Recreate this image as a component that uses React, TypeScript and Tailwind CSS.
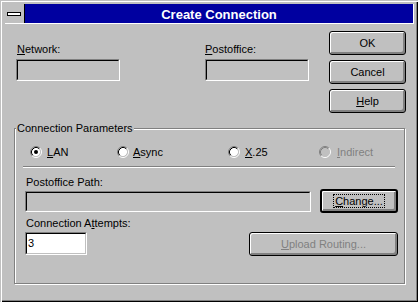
import React from 'react';

function Sunken({ className = '', inner = '', children }: { className?: string; inner?: string; children?: React.ReactNode }) {
  return (
    <div className={`border border-t-[#808080] border-l-[#808080] border-b-white border-r-white ${className}`}>
      <div className={`h-full border border-t-black border-l-black border-b-[#c0c0c0] border-r-[#c0c0c0] ${inner}`}>{children}</div>
    </div>
  );
}

function Btn({ className = '', def = false, disabled = false, children }: { className?: string; def?: boolean; disabled?: boolean; children: React.ReactNode }) {
  return (
    <button
      className={`flex items-center justify-center rounded-[3px] border-black bg-[#c0c0c0] p-0 text-[11px] leading-[13px] shadow-[inset_1px_1px_0_#fff,inset_-1px_-1px_0_#808080,inset_-2px_-2px_0_#808080] ${
        def ? 'border-2' : 'border'
      } ${disabled ? 'text-[#808080]' : 'text-black'} ${className}`}
    >
      {children}
    </button>
  );
}

function Radio({ checked = false, disabled = false }: { checked?: boolean; disabled?: boolean }) {
  return (
    <svg width="12" height="12" viewBox="0 0 12 12" className="shrink-0">
      <circle cx="6" cy="6" r="4.2" fill={disabled ? '#c0c0c0' : '#fff'} />
      <path d="M2.11 9.89 A5.5 5.5 0 0 1 9.89 2.11" fill="none" stroke="#808080" />
      <path d="M9.89 2.11 A5.5 5.5 0 0 1 2.11 9.89" fill="none" stroke="#fff" />
      <path d="M2.82 9.18 A4.5 4.5 0 0 1 9.18 2.82" fill="none" stroke={disabled ? '#808080' : '#000'} />
      <path d="M9.18 2.82 A4.5 4.5 0 0 1 2.82 9.18" fill="none" stroke="#c0c0c0" />
      {checked && <circle cx="6" cy="6" r="2" fill="#000" />}
    </svg>
  );
}

export default function App() {
  return (
    <div className="h-[302px] w-[418px] overflow-hidden bg-[#c0c0c0] pt-[4px] font-['Liberation_Sans',Arial,sans-serif] text-[11px] leading-[13px] text-black shadow-[inset_1px_1px_0_#c0c0c0,inset_2px_2px_0_#fff,inset_-1px_-1px_0_#000,inset_-2px_-2px_0_#808080]">
      {/* title bar */}
      <div className="ml-[5px] flex h-[20px] w-[409px] border-r border-b border-white">
        <div className="flex w-[20px] items-center justify-center border-r border-black bg-[#c0c0c0]">
          <div className="mr-[1px] h-[4px] w-[14px] border border-black bg-white" />
        </div>
        <div className="flex flex-1 items-center justify-center bg-[#0000a0] pt-[1px] text-[13px] font-bold text-white">
          Create Connection
        </div>
      </div>

      <div className="flex pl-[16px]">
        <div className="flex pt-[19px]">
          <div className="w-[104px]">
            <div className="ml-[1px] h-[13px]">
              <u>N</u>etwork:
            </div>
            <Sunken className="mt-[3px] h-[22px]" />
          </div>
          <div className="ml-[85px] w-[104px]">
            <div className="h-[13px]">
              <u>P</u>ostoffice:
            </div>
            <Sunken className="mt-[3px] h-[22px]" />
          </div>
        </div>
        <div className="ml-[20px] flex flex-col gap-[5px] pt-[7px]">
          <Btn className="h-[24px] w-[77px]">OK</Btn>
          <Btn className="h-[24px] w-[77px]">Cancel</Btn>
          <Btn className="h-[24px] w-[77px]">
            <span>
              <u>H</u>elp
            </span>
          </Btn>
        </div>
      </div>

      {/* group box */}
      <div className="ml-[14px] mt-[15px] flex h-[156px] w-[391px] flex-col border border-[#808080] shadow-[1px_1px_0_#fff,inset_1px_1px_0_#fff]">
        <span className="-mt-[7px] ml-[1px] w-fit bg-[#c0c0c0] px-[1px]">Connection Parameters</span>

        <div className="mt-[11px] flex h-[12px] items-center pl-[15px]">
          <div className="flex w-[87px] items-center gap-[5px]">
            <Radio checked />
            <span>
              <u>L</u>AN
            </span>
          </div>
          <div className="flex w-[111px] items-center gap-[4px]">
            <Radio />
            <span>
              <u>A</u>sync
            </span>
          </div>
          <div className="flex w-[91px] items-center gap-[5px]">
            <Radio />
            <span>
              <u>X</u>.25
            </span>
          </div>
          <div className="flex items-center gap-[6px] text-[#808080]">
            <Radio disabled />
            <span>
              <u>I</u>ndirect
            </span>
          </div>
        </div>

        <div className="ml-[8px] mt-[8px] h-[2px] w-[372px] border-t border-b border-t-[#808080] border-b-white" />

        <div className="ml-[11px] mt-[8px] h-[13px]">Postoffice Path:</div>
        <div className="ml-[10px] flex">
          <Sunken className="mt-[2px] h-[21px] w-[286px]" />
          <Btn def className="ml-[9px] h-[24px] w-[78px]">
            <span className="border border-dotted border-black px-[1px] leading-[12px]">
              <u>C</u>hange...
            </span>
          </Btn>
        </div>

        <div className="ml-[11px] mt-[4px] h-[13px]">
          Connection A<u>t</u>tempts:
        </div>
        <div className="ml-[10px] mt-[2px] flex">
          <Sunken className="h-[23px] w-[62px]" inner="bg-white pl-[1px] pt-[3px]">
            3
          </Sunken>
          <Btn disabled className="ml-[162px] h-[24px] w-[149px]">
            <span>
              <u>U</u>pload Routing...
            </span>
          </Btn>
        </div>
      </div>
    </div>
  );
}
